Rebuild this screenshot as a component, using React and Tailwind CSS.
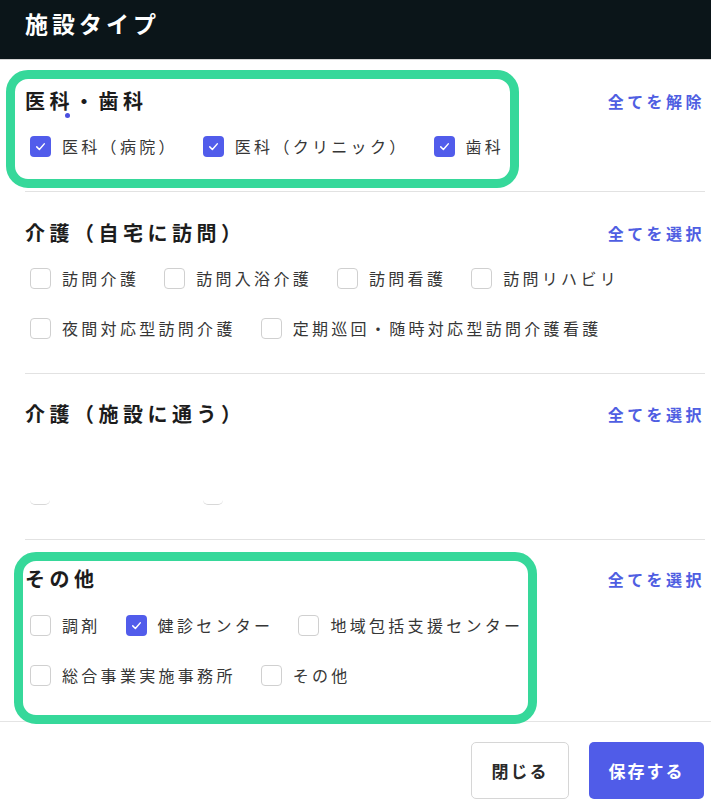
import React from 'react'

const SECTIONS = [
    {
        title: '医科・歯科',
        action: '全てを解除',
        rows: [
            [
                { label: '医科（病院）', checked: true },
                { label: '医科（クリニック）', checked: true },
                { label: '歯科', checked: true },
            ],
        ],
    },
    {
        title: '介護（自宅に訪問）',
        action: '全てを選択',
        rows: [
            [
                { label: '訪問介護' },
                { label: '訪問入浴介護' },
                { label: '訪問看護' },
                { label: '訪問リハビリ' },
            ],
            [
                { label: '夜間対応型訪問介護' },
                { label: '定期巡回・随時対応型訪問介護看護' },
            ],
        ],
    },
]

const OTHER = {
    title: 'その他',
    action: '全てを選択',
    rows: [
        [
            { label: '調剤' },
            { label: '健診センター', checked: true },
            { label: '地域包括支援センター' },
        ],
        [
            { label: '総合事業実施事務所' },
            { label: 'その他' },
        ],
    ],
}

function Checkbox({ checked }) {
    if (checked) {
        return (
            <span className="flex h-[21px] w-[21px] flex-shrink-0 items-center justify-center rounded-[4px] bg-[#515ceb]">
                <svg viewBox="0 0 20 20" className="h-[15px] w-[15px]" fill="none" stroke="white" strokeWidth="2" strokeLinecap="round" strokeLinejoin="round">
                    <polyline points="5 10.5 8.5 14 15 6.5" />
                </svg>
            </span>
        )
    }
    return <span className="h-[21px] w-[21px] flex-shrink-0 rounded-[4px] border-[1.5px] border-[#d0d0d0] bg-white" />
}

function SectionHead({ title, action }) {
    return (
        <div className="flex h-7 items-center justify-between">
            <h2 className="text-[20px] font-bold leading-7 tracking-[4.5px] text-[#1c1c1c]">{title}</h2>
            <button className="text-[16px] font-bold leading-7 tracking-[3.5px] text-[#4f5ee2]">{action}</button>
        </div>
    )
}

function Rows({ rows, top = 'mt-[19px]' }) {
    return (
        <div className={`${top} flex flex-col gap-[26px] pl-[5px]`}>
            {rows.map((row, i) => (
                <div key={i} className="flex h-6 items-center gap-x-[25px]">
                    {row.map((item) => (
                        <label key={item.label} className="flex items-center gap-[11px]">
                            <Checkbox checked={item.checked} />
                            <span className="text-[16px] leading-6 tracking-[3.3px] text-[#363636]">{item.label}</span>
                        </label>
                    ))}
                </div>
            ))}
        </div>
    )
}

export default function App() {
    return (
        <div className="relative h-[802px] w-[711px] overflow-hidden bg-white" style={{ fontFamily: '"Noto Sans CJK JP", "Noto Sans", sans-serif' }}>
            {/* Header */}
            <div className="h-[60px] border-b border-[#d4d4d4] bg-[#0b1519] pl-[25px] pt-[7px]">
                <h1 className="text-[23px] font-bold leading-8 tracking-[4px] text-white">施設タイプ</h1>
            </div>

            <div className="pl-[25px] pr-[6px]">
                {SECTIONS.map((s) => (
                    <section key={s.title} className="border-b border-[#e2e2e2] pb-[33px] pt-[27px]">
                        <SectionHead title={s.title} action={s.action} />
                        <Rows rows={s.rows} />
                    </section>
                ))}

                {/* Loading section, options not yet rendered */}
                <section className="h-[166px] border-b border-[#e2e2e2] pt-[26px]">
                    <SectionHead title="介護（施設に通う）" action="全てを選択" />
                    <div className="flex pl-[5px] pt-[72px]">
                        <span className="h-[5px] w-5 rounded-b-[5px] border-b-[1.5px] border-[#d8d8d8]" />
                        <span className="ml-[153px] h-[5px] w-5 rounded-b-[5px] border-b-[1.5px] border-[#d8d8d8]" />
                    </div>
                </section>

                <section className="pb-[34px] pt-[25px]">
                    <SectionHead title={OTHER.title} action={OTHER.action} />
                    <Rows rows={OTHER.rows} top="mt-[20px]" />
                </section>
            </div>

            {/* Footer */}
            <div className="flex justify-end gap-5 border-t border-[#e4e4e4] pr-[7px] pt-[20px]">
                <button className="h-[57px] w-[98px] rounded-[5px] border border-[#d6d6d6] bg-white text-[17px] font-bold tracking-[2px] text-[#2a2a2a]">閉じる</button>
                <button className="h-[57px] w-[115px] rounded-[5px] bg-[#505ce8] text-[17px] font-bold tracking-[2px] text-white">保存する</button>
            </div>

            {/* Annotation highlights */}
            <div className="pointer-events-none absolute left-[6px] top-[70px] h-[118px] w-[513px] rounded-[22px] border-[9px] border-[#36d89a]" />
            <div className="pointer-events-none absolute left-[14px] top-[552px] h-[172px] w-[523px] rounded-[22px] border-[9px] border-[#36d89a]" />
            <span className="absolute left-[65px] top-[113px] h-[5px] w-[5px] rounded-full bg-[#4a4fe0]" />
        </div>
    )
}
